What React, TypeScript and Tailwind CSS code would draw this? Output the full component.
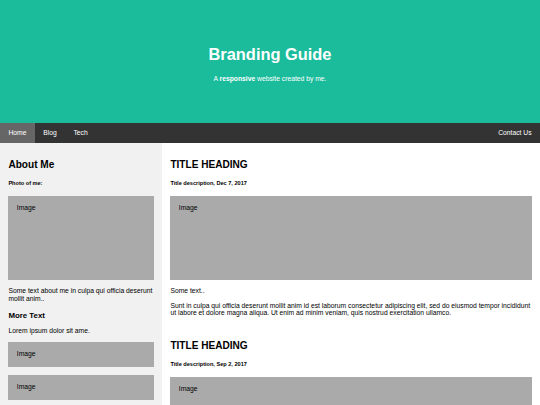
import React from "react";

const navLinks = ["Home", "Blog", "Tech"];

function FakeImg({ tall }: { tall?: boolean }) {
  return (
    <div className={`bg-[#aaaaaa] w-full p-[8.4px] ${tall ? "h-[84.5px]" : "h-[25.4px]"}`}>
      Image
    </div>
  );
}

function Post({ date }: { date: string }) {
  return (
    <>
      <h2 className="text-[10.08px] font-bold my-[8.37px]">TITLE HEADING</h2>
      <h5 className="text-[5.58px] font-bold my-[9.32px]">Title description, {date}</h5>
      <FakeImg tall />
      <p className="my-[6.72px]">Some text..</p>
      <p className="my-[6.72px]">
        Sunt in culpa qui officia deserunt mollit anim id est laborum consectetur adipiscing elit, sed do
        eiusmod tempor incididunt ut labore et dolore magna aliqua. Ut enim ad minim veniam, quis nostrud
        exercitation ullamco.
      </p>
    </>
  );
}

export default function App() {
  return (
    <div className="font-['Liberation_Sans',Arial,sans-serif] text-[6.76px] leading-[1.15] text-black">
      <div className="bg-[#1abc9c] text-white text-center p-[33.6px]">
        <h1 className="text-[16.4px] font-bold my-[11.26px]">Branding Guide</h1>
        <p className="my-[6.72px]">
          A <b className="font-bold">responsive</b> website created by me.
        </p>
      </div>

      <nav className="flex bg-[#333333]">
        {navLinks.map((l, i) => (
          <a
            key={l}
            href="#"
            className={`block text-white text-center py-[5.88px] px-[8.4px] ${i === 0 ? "bg-[#666666]" : ""}`}
          >
            {l}
          </a>
        ))}
        <a href="#" className="block ml-auto text-white text-center py-[5.88px] px-[8.4px]">
          Contact Us
        </a>
      </nav>

      <div className="flex">
        <div className="w-[30%] bg-[#f1f1f1] p-[8.4px]">
          <h2 className="text-[10.08px] font-bold my-[8.37px]">About Me</h2>
          <h5 className="text-[5.58px] font-bold my-[9.32px]">Photo of me:</h5>
          <FakeImg tall />
          <p className="my-[6.72px]">Some text about me in culpa qui officia deserunt mollit anim..</p>
          <h3 className="text-[7.86px] font-bold my-[7.86px]">More Text</h3>
          <p className="my-[6.72px]">Lorem ipsum dolor sit ame.</p>
          <FakeImg />
          <br />
          <FakeImg />
          <br />
          <FakeImg />
        </div>
        <div className="w-[70%] bg-white p-[8.4px]">
          <Post date="Dec 7, 2017" />
          <br />
          <Post date="Sep 2, 2017" />
        </div>
      </div>

      <div className="bg-[#dddddd] text-center p-[8.4px]">
        <h2 className="text-[10.08px] font-bold my-[8.37px]">Footer</h2>
      </div>
    </div>
  );
}
